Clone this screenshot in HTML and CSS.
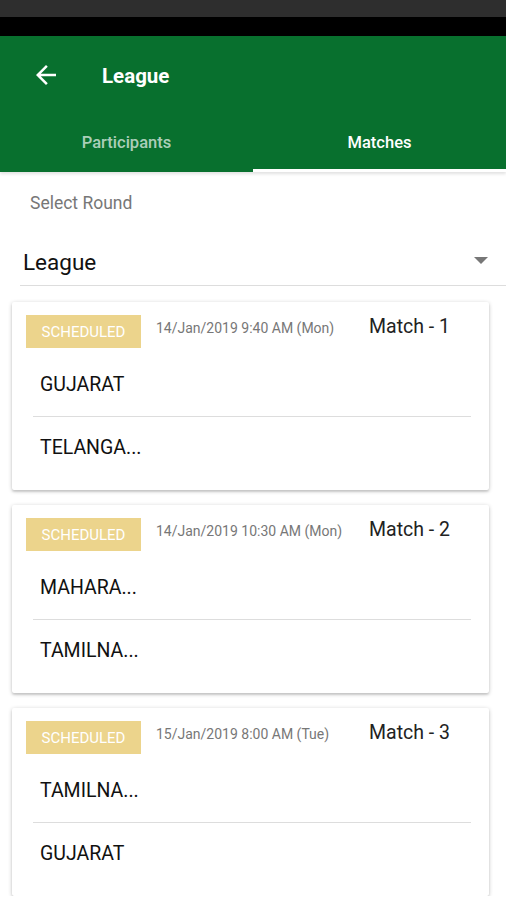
FILE: index.html
```html
<!DOCTYPE html>
<html lang="en">

<head>
    <meta charset="UTF-8">
    <meta name="viewport" content="width=device-width, initial-scale=1.0">
    <title>League</title>
    <link rel="stylesheet" href="styles.css">
</head>

<body>
    <div class="statusbar"></div>
    <div class="navbar"></div>
    <header class="appbar">
        <div class="toolbar">
            <svg class="back" width="24" height="24" viewBox="0 0 24 24">
                <path d="M20 11H7.83l5.59-5.59L12 4l-8 8 8 8 1.41-1.41L7.83 13H20v-2z" fill="#fff"/>
            </svg>
            <h1>League</h1>
        </div>
        <div class="tabs">
            <div class="tab">Participants</div>
            <div class="tab active">Matches</div>
        </div>
    </header>
    <main class="content">
        <div class="label">Select Round</div>
        <div class="select">
            <span>League</span>
            <span class="caret"></span>
        </div>

        <div class="card">
            <div class="card-head">
                <span class="badge">SCHEDULED</span>
                <span class="date">14/Jan/2019 9:40 AM (Mon)</span>
                <span class="match">Match - 1</span>
            </div>
            <div class="teams">
                <div class="team">GUJARAT</div>
                <div class="team">TELANGA...</div>
            </div>
        </div>

        <div class="card">
            <div class="card-head">
                <span class="badge">SCHEDULED</span>
                <span class="date">14/Jan/2019 10:30 AM (Mon)</span>
                <span class="match">Match - 2</span>
            </div>
            <div class="teams">
                <div class="team">MAHARA...</div>
                <div class="team">TAMILNA...</div>
            </div>
        </div>

        <div class="card">
            <div class="card-head">
                <span class="badge">SCHEDULED</span>
                <span class="date">15/Jan/2019 8:00 AM (Tue)</span>
                <span class="match">Match - 3</span>
            </div>
            <div class="teams">
                <div class="team">TAMILNA...</div>
                <div class="team">GUJARAT</div>
            </div>
        </div>
    </main>
</body>

</html>
```

FILE: styles.css
```css
body {
    font-family: Roboto, "Liberation Sans", sans-serif;
    margin: 0;
    padding: 0;
    background-color: #fff;
    color: #111;
    overflow: hidden;
}

.statusbar {
    height: 17px;
    background-color: #2e2e2e;
}

.navbar {
    height: 19px;
    background-color: #000;
}

.appbar {
    background-color: #08702e;
    color: #fff;
    box-shadow: 0 2px 3px rgba(0, 0, 0, 0.12);
}

.toolbar {
    height: 78px;
    display: flex;
    align-items: center;
    padding-left: 31px;
}

.back {
    width: 30px;
    height: 30px;
    margin-right: 41px;
}

h1 {
    margin: 0;
    font-size: 20.5px;
    font-weight: 700;
    padding-top: 2px;
}

.tabs {
    display: flex;
    height: 58px;
}

.tab {
    flex: 1;
    display: flex;
    align-items: center;
    justify-content: center;
    font-size: 16.5px;
    font-weight: 500;
    color: rgba(255, 255, 255, 0.68);
    border-bottom: 3px solid transparent;
    padding-top: 2px;
}

.tab.active {
    color: #fff;
    border-bottom-color: #fff;
}

.content {
    padding-left: 12px;
}

.label {
    font-size: 17.5px;
    color: #777;
    padding: 21px 0 0 18px;
    height: 22px;
}

.select {
    display: flex;
    align-items: center;
    justify-content: space-between;
    margin: 24px 0 0 8px;
    height: 46px;
    border-bottom: 1px solid #ddd;
    font-size: 22.5px;
    color: #111;
    padding: 0 18px 0 3px;
}

.caret {
    width: 0;
    height: 0;
    border-left: 7px solid transparent;
    border-right: 7px solid transparent;
    border-top: 7px solid #777;
    margin-top: -4px;
}

.card {
    width: 477px;
    box-sizing: border-box;
    margin-top: 16px;
    padding: 13px 18px 12px 14px;
    background-color: #fff;
    border-radius: 2px;
    box-shadow: 0 1px 4px rgba(0, 0, 0, 0.22), 0 2px 2px rgba(0, 0, 0, 0.1);
}

.card + .card {
    margin-top: 15px;
}

.card-head {
    display: flex;
    align-items: flex-start;
    height: 33px;
}

.badge {
    width: 115px;
    height: 33px;
    display: flex;
    align-items: center;
    justify-content: center;
    background-color: #ecd48c;
    color: #fff;
    font-size: 15px;
}

.date {
    font-size: 14px;
    color: #777;
    margin: 5px 0 0 15px;
    width: 213px;
}

.match {
    font-size: 19.5px;
    color: #222;
    margin-top: 0;
}

.teams {
    margin: 4px 0 0 7px;
}

.team {
    height: 64px;
    display: flex;
    align-items: center;
    padding-left: 7px;
    font-size: 19.5px;
    color: #111;
}

.team:first-child {
    border-bottom: 1px solid #ddd;
}

.team:last-child {
    height: 61px;
}
```
